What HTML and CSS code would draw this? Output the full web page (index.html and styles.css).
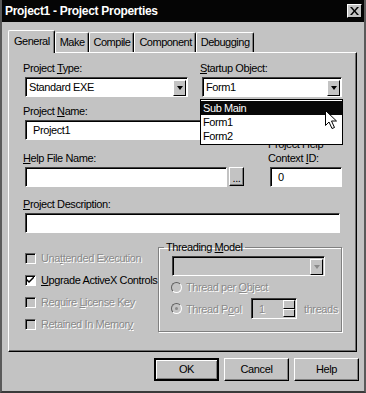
FILE: index.html
```html
<!DOCTYPE html>
<html lang="en">

<head>
    <meta charset="UTF-8">
    <title>Project1 - Project Properties</title>
    <link rel="stylesheet" href="styles.css">
</head>

<body>
    <div class="window">
        <div class="titlebar">
            <span class="title">Project1 - Project Properties</span>
            <span class="close">
                <svg width="9" height="8" viewBox="0 0 9 8"><path d="M0 0h2l2.5 3 2.5-3h2L5.5 4 9 8H7L4.5 5 2 8H0l3.5-4z" fill="#000"/></svg>
            </span>
        </div>

        <div class="tabs">
            <div class="tab active">General</div>
            <div class="tab">Make</div>
            <div class="tab">Compile</div>
            <div class="tab">Component</div>
            <div class="tab">Debugging</div>
        </div>

        <div class="panel">
            <div class="row">
                <div class="field type-field">
                    <label>Project <u>T</u>ype:</label>
                    <div class="combo"><span class="value">Standard EXE</span><span class="drop"><i></i></span></div>
                </div>
                <div class="field startup-field">
                    <label><u>S</u>tartup Object:</label>
                    <div class="combo"><span class="value">Form1</span><span class="drop"><i></i></span></div>
                    <ul class="droplist">
                        <li class="selected">Sub Main</li>
                        <li>Form1</li>
                        <li>Form2</li>
                    </ul>
                    <svg class="cursor" width="12" height="20" viewBox="0 0 12 20">
                        <path d="M0.5 0.5v15l3.5-3.5 3 6.5 2.5-1-3-6.5h5z" fill="#fff" stroke="#000" stroke-width="1"/>
                    </svg>
                </div>
            </div>

            <div class="field name-field">
                <label>Project <u>N</u>ame:</label>
                <div class="textbox">Project1</div>
            </div>

            <div class="row bottom-aligned">
                <div class="field help-field">
                    <label><u>H</u>elp File Name:</label>
                    <div class="with-button">
                        <div class="textbox"></div>
                        <div class="dots">...</div>
                    </div>
                </div>
                <div class="field context-field">
                    <label>Project Help<br>Context <u>I</u>D:</label>
                    <div class="textbox">0</div>
                </div>
            </div>

            <div class="field desc-field">
                <label><u>P</u>roject Description:</label>
                <div class="textbox"></div>
            </div>

            <div class="row lower">
                <div class="checks">
                    <div class="check disabled"><span class="box"></span><span>Una<u>t</u>tended Execution</span></div>
                    <div class="check"><span class="box on">
                        <svg width="7" height="7" viewBox="0 0 7 7"><path d="M0 2l2 2 5-5v2L2 6 0 4z" fill="#000"/></svg>
                    </span><span><u>U</u>pgrade ActiveX Controls</span></div>
                    <div class="check disabled"><span class="box"></span><span>Require <u>L</u>icense Key</span></div>
                    <div class="check disabled"><span class="box"></span><span>Retained In Memor<u>y</u></span></div>
                </div>

                <fieldset class="group">
                    <legend>Threading <u>M</u>odel</legend>
                    <div class="combo off"><span class="value"></span><span class="drop"><i></i></span></div>
                    <div class="radio disabled"><span class="dot"></span><span>Thread per <u>O</u>bject</span></div>
                    <div class="radio disabled">
                        <span class="dot on"></span><span class="pool">Thread P<u>o</u>ol</span>
                        <span class="spinner">
                            <span class="spin-value">1</span>
                            <span class="spin-buttons"><b></b><b></b></span>
                        </span>
                        <span>threads</span>
                    </div>
                </fieldset>
            </div>
        </div>

        <div class="buttons">
            <div class="button default">OK</div>
            <div class="button">Cancel</div>
            <div class="button">Help</div>
        </div>
    </div>
</body>

</html>
```

FILE: styles.css
```css
body {
    margin: 0;
    font-family: "Liberation Sans", Arial, sans-serif;
    font-size: 11px;
    line-height: 14px;
    letter-spacing: -0.4px;
    color: #000;
    background-color: #c3c3c3;
}

.window {
    width: 366px;
    height: 393px;
    box-sizing: border-box;
    background-color: #c3c3c3;
    border-left: 2px solid #5a5a5a;
    border-right: 2px solid #5a5a5a;
    border-bottom: 2px solid #3a3a3a;
    overflow: hidden;
}

.titlebar {
    height: 22px;
    background-color: #050505;
    color: #fff;
    display: flex;
    align-items: center;
    justify-content: space-between;
    padding: 0 4px 0 5px;
    margin-left: -2px;
    margin-right: -2px;
}

.title {
    font-weight: bold;
    font-size: 12px;
    letter-spacing: -0.3px;
}

.close {
    width: 13px;
    height: 12px;
    background-color: #c3c3c3;
    border: 1px solid;
    border-color: #fff #000 #000 #fff;
    display: flex;
    align-items: center;
    justify-content: center;
}

/* tabs */

.tabs {
    display: flex;
    align-items: flex-end;
    margin: 8px 0 0 6px;
    height: 22px;
}

.tab {
    height: 19px;
    line-height: 18px;
    padding: 0 3px 0 4px;
    letter-spacing: -0.5px;
    border: 1px solid;
    border-color: #fff #000 transparent #fff;
    border-bottom: none;
    border-radius: 2px 2px 0 0;
    box-shadow: inset -1px 0 #808080;
}

.tab.active {
    height: 22px;
    line-height: 20px;
    position: relative;
    z-index: 1;
    background-color: #c3c3c3;
    margin-bottom: -1px;
    padding: 0 4px 0 5px;
}

/* panel */

.panel {
    margin-left: 6px;
    width: 349px;
    height: 300px;
    box-sizing: border-box;
    border: 1px solid;
    border-color: #fff #000 #000 #fff;
    box-shadow: inset -1px -1px #6e6e6e;
    padding: 8px 0 0 14px;
}

.row {
    display: flex;
}

.bottom-aligned {
    align-items: flex-end;
    margin-top: -3px;
}

.field label {
    display: block;
    margin-bottom: 2px;
}

.type-field {
    width: 177px;
}

.type-field .combo {
    width: 163px;
}

.startup-field {
    position: relative;
}

.startup-field .combo {
    width: 140px;
}

.combo {
    height: 20px;
    box-sizing: border-box;
    margin-left: 2px;
    background-color: #fff;
    border: 1px solid;
    border-color: #404040 #fff #fff #404040;
    box-shadow: inset 1px 1px #000;
    display: flex;
    justify-content: space-between;
    align-items: center;
    padding: 0 1px 0 3px;
}

.combo .drop {
    width: 13px;
    height: 16px;
    box-sizing: border-box;
    margin-top: 1px;
    background-color: #c3c3c3;
    border: 1px solid;
    border-color: #fff #000 #000 #fff;
    display: flex;
    align-items: center;
    justify-content: center;
}

.combo .drop i {
    border-left: 3px solid transparent;
    border-right: 3px solid transparent;
    border-top: 4px solid #000;
}

.combo.off {
    background-color: #c3c3c3;
    width: 153px;
    margin-left: 1px;
}

.combo.off .drop i {
    border-top-color: #8a8a8a;
}

.droplist {
    position: absolute;
    left: 0;
    top: 38px;
    width: 141px;
    margin: 0;
    padding: 1px 0;
    list-style-type: none;
    background-color: #fff;
    border: 1px solid #000;
    z-index: 2;
}

.droplist li {
    height: 14px;
    padding-left: 2px;
}

.droplist li.selected {
    background-color: #080808;
    color: #fff;
}

.cursor {
    position: absolute;
    left: 125px;
    top: 49px;
    z-index: 3;
}

.textbox {
    height: 20px;
    box-sizing: border-box;
    margin-left: 2px;
    background-color: #fff;
    border: 1px solid;
    border-color: #404040 #fff #fff #404040;
    box-shadow: inset 1px 1px #000;
    padding: 2px 0 0 7px;
}

.name-field {
    margin-top: 7px;
}

.name-field .textbox {
    width: 218px;
}

.help-field {
    width: 245px;
}

.with-button {
    display: flex;
    gap: 2px;
}

.with-button .textbox {
    width: 202px;
}

.dots {
    width: 15px;
    height: 19px;
    box-sizing: border-box;
    border: 1px solid;
    border-color: #fff #000 #000 #fff;
    box-shadow: inset -1px -1px #808080;
    text-align: center;
    line-height: 20px;
}

.context-field .textbox {
    width: 72px;
}

.desc-field {
    margin-top: 10px;
}

.desc-field .textbox {
    width: 315px;
}

/* checks and threading */

.lower {
    margin-top: 7px;
}

.checks {
    width: 133px;
    padding: 11px 0 0 2px;
    display: flex;
    flex-direction: column;
    gap: 8px;
}

.check {
    display: flex;
    align-items: center;
    gap: 5px;
    height: 14px;
    white-space: nowrap;
}

.box {
    width: 11px;
    height: 11px;
    box-sizing: border-box;
    border: 1px solid;
    border-color: #606060 #fff #fff #606060;
    box-shadow: inset 1px 1px #000;
    background-color: #c3c3c3;
    display: flex;
    align-items: center;
    justify-content: center;
}

.box.on {
    background-color: #fff;
}

.disabled {
    color: #8a8a8a;
    text-shadow: 1px 1px 0 #fff;
}

.group {
    width: 184px;
    height: 92px;
    box-sizing: border-box;
    margin: 0;
    padding: 2px 0 0 12px;
    border: 1px solid #808080;
    box-shadow: 1px 1px #fff, inset 1px 1px #fff;
}

.group legend {
    padding: 0 2px;
    margin-left: -7px;
}

.radio {
    display: flex;
    align-items: center;
    gap: 4px;
    margin-top: 4px;
    white-space: nowrap;
}

.dot {
    width: 11px;
    height: 11px;
    box-sizing: border-box;
    border-radius: 50%;
    border: 1px solid;
    border-color: #606060 #fff #fff #606060;
    background-color: #c3c3c3;
    position: relative;
}

.dot.on::after {
    content: "";
    position: absolute;
    left: 3px;
    top: 3px;
    width: 3px;
    height: 3px;
    border-radius: 50%;
    background-color: #8a8a8a;
}

.pool {
    width: 61px;
}

.spinner {
    width: 46px;
    height: 21px;
    box-sizing: border-box;
    border: 1px solid;
    border-color: #404040 #fff #fff #404040;
    box-shadow: inset 1px 1px #000;
    display: flex;
    justify-content: space-between;
    padding: 1px;
    margin-right: 3px;
}

.spin-value {
    padding: 2px 0 0 6px;
}

.spin-buttons {
    width: 12px;
    display: flex;
    flex-direction: column;
}

.spin-buttons b {
    flex: 1;
    border: 1px solid;
    border-color: #fff #000 #000 #fff;
}

/* dialog buttons */

.buttons {
    display: flex;
    justify-content: flex-end;
    gap: 5px;
    margin: 6px 5px 0 0;
}

.button {
    width: 65px;
    height: 23px;
    box-sizing: border-box;
    border: 1px solid;
    border-color: #fff #000 #000 #fff;
    box-shadow: inset -1px -1px #808080;
    text-align: center;
    line-height: 21px;
}

.button.default {
    border: 2px solid #000;
    box-shadow: inset 1px 1px #fff, inset -1px -1px #808080;
    line-height: 19px;
}
```
